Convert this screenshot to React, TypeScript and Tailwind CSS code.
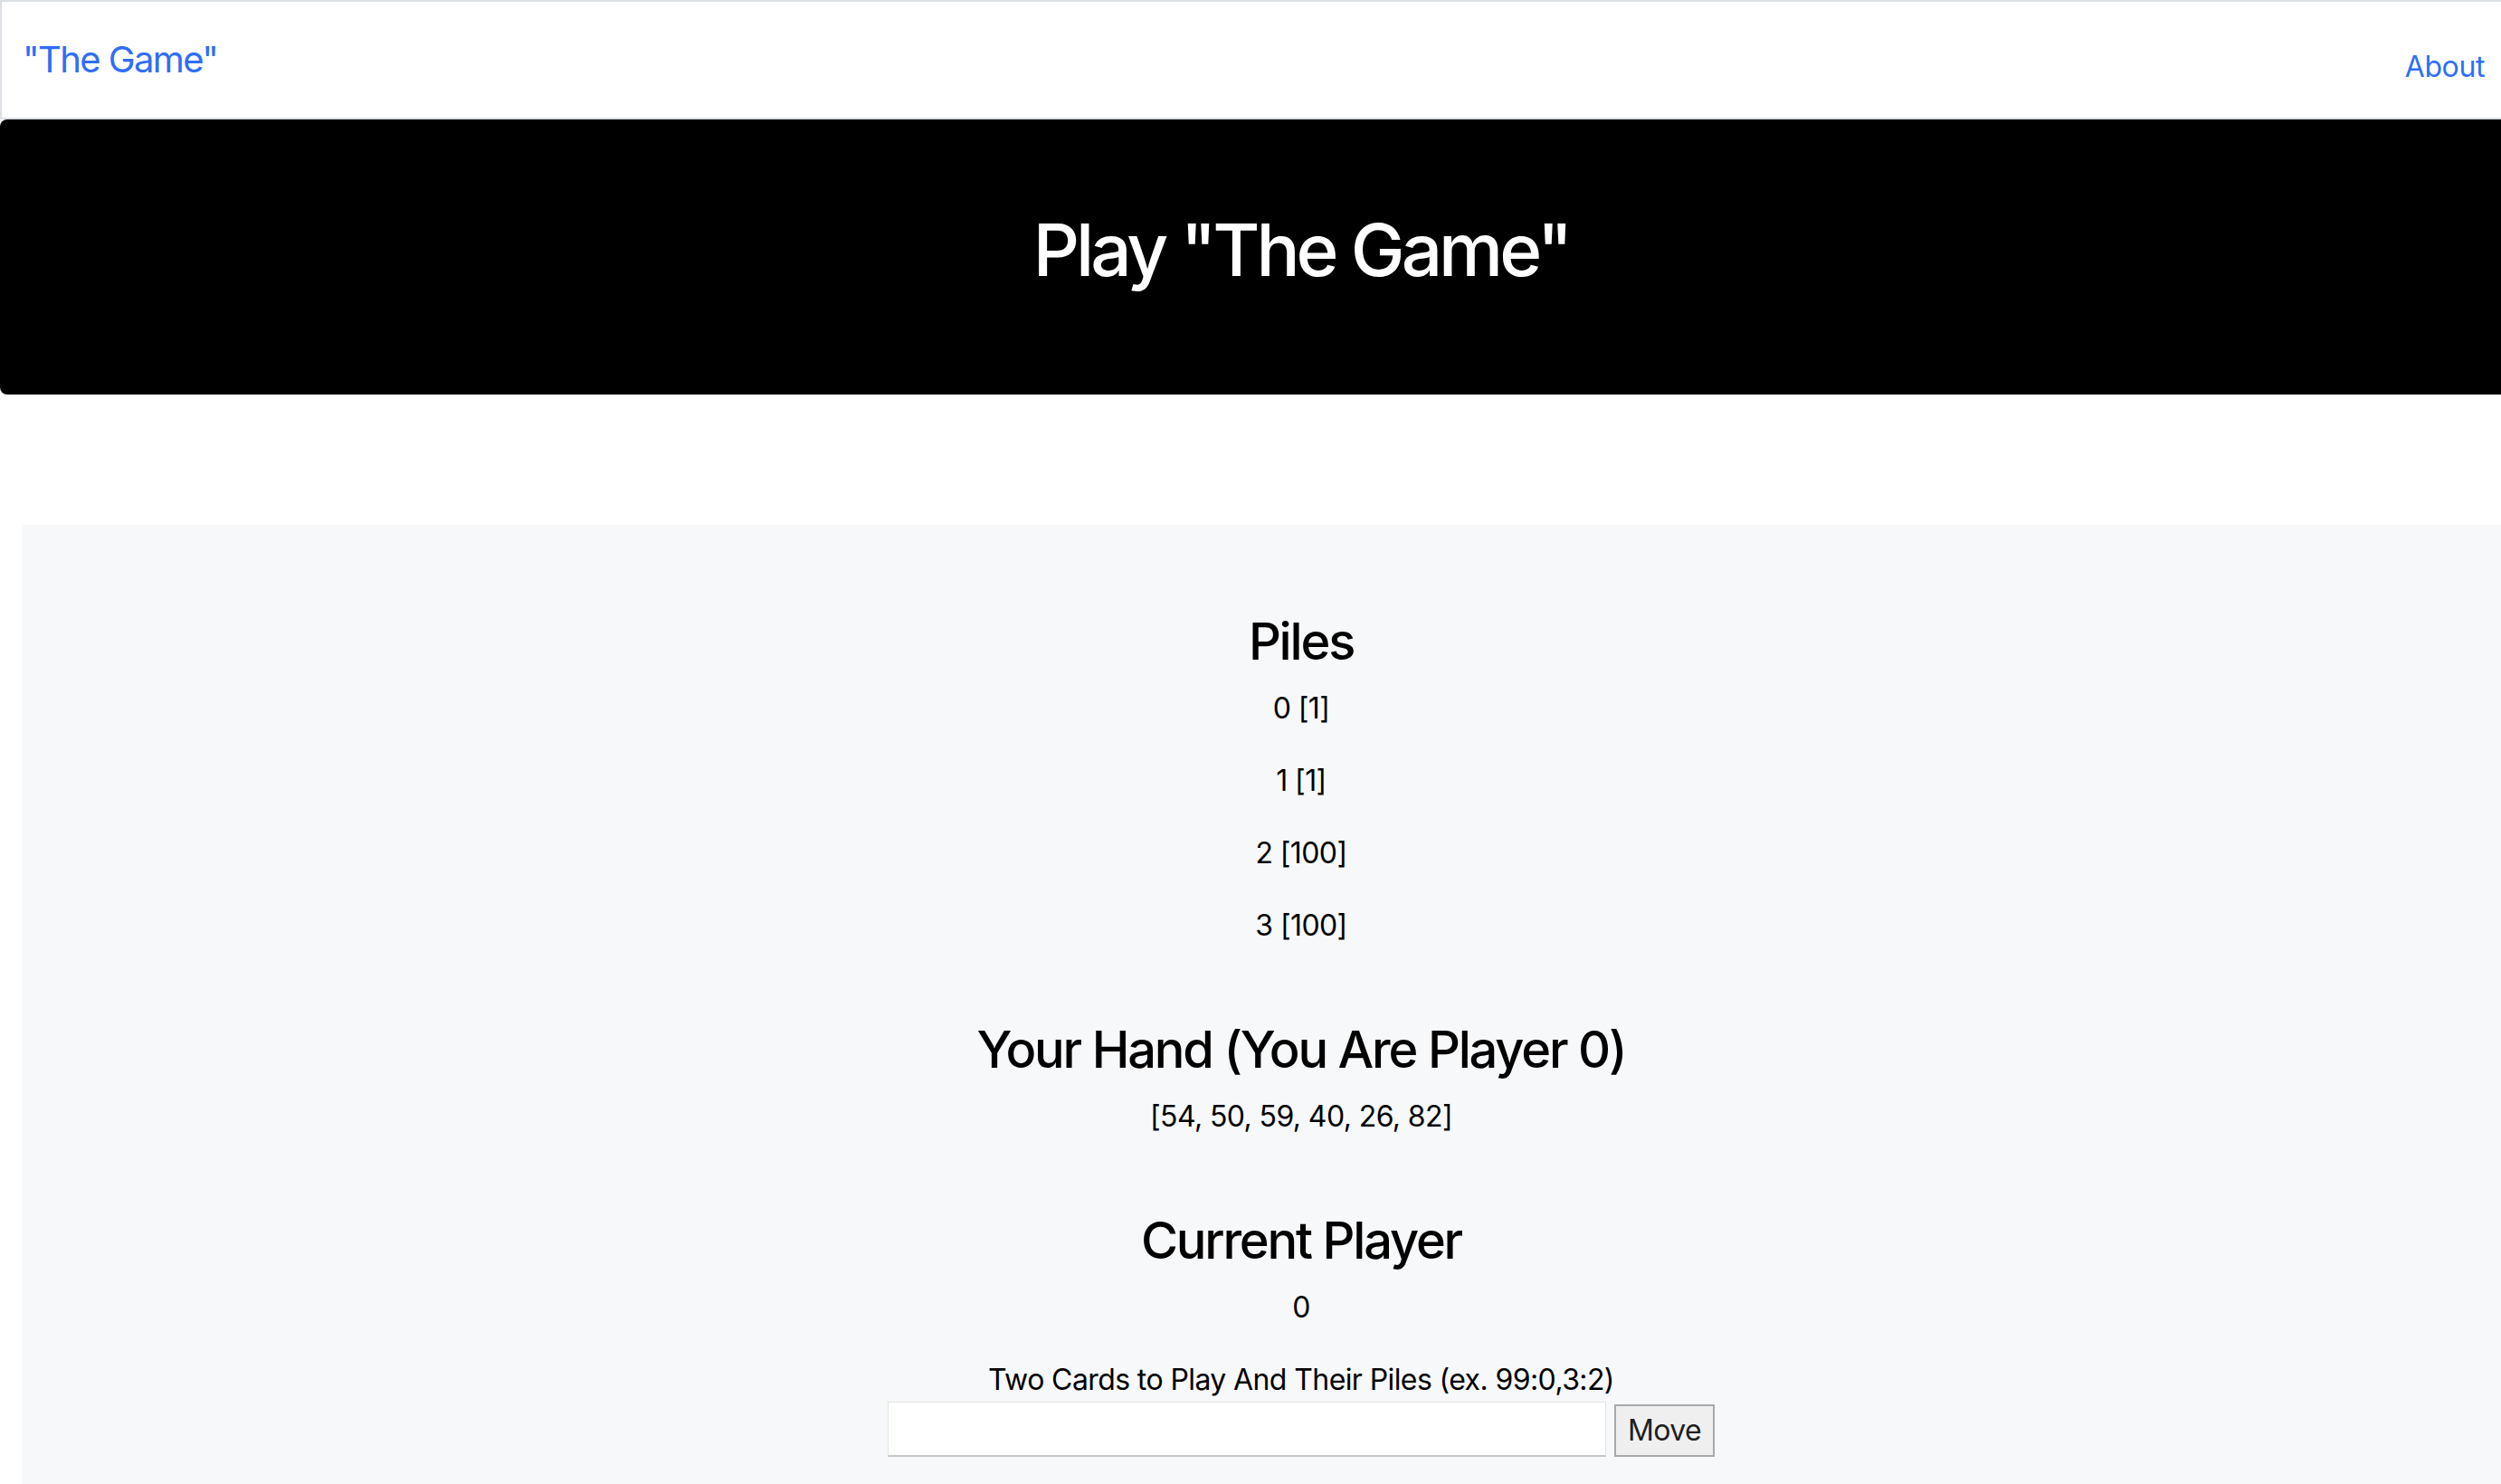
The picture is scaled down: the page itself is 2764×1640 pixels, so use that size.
import React from 'react';

const piles = ['0 [1]', '1 [1]', '2 [100]', '3 [100]'];
const hand = [54, 50, 59, 40, 26, 82];

function App() {
  return (
    <div
      className="w-[2764px] h-[1640px] overflow-hidden bg-white text-black"
      style={{ fontFamily: 'Inter, "Noto Sans", "Liberation Sans", sans-serif' }}
    >
      {/* Navbar */}
      <nav className="h-[132px] border-t-2 border-l-2 border-b-2 border-[#dde0e4] flex items-start justify-between">
        <a className="ml-[23px] mt-[34px] text-[40px] leading-[60px] tracking-[-1.6px] text-[#2f6ef5]">"The Game"</a>
        <a className="mr-[18px] mt-[48px] text-[32px] leading-[48px] tracking-[-0.4px] text-[#2f6ef5]">About</a>
      </nav>

      <div className="w-[2876px]">
        {/* Hero */}
        <div className="h-[304px] bg-black rounded-[8px] pt-[96px] text-center">
          <h1 className="text-[80px] leading-[96px] font-medium tracking-[-4px] text-white">Play "The Game"</h1>
        </div>

        {/* Game board */}
        <div className="mt-[144px] ml-[24px] w-[2828px] h-[1200px] bg-[#f7f8fa] pt-[96px] text-center tracking-[-0.6px]">
          <h3 className="text-[56px] leading-[67px] font-medium tracking-[-2.2px] mb-[16px]">Piles</h3>
          {piles.map((p) => (
            <p key={p} className="text-[32px] leading-[48px] mb-[32px]">{p}</p>
          ))}

          <h3 className="mt-[80px] text-[56px] leading-[67px] font-medium tracking-[-2.2px] mb-[16px]">Your Hand (You Are Player 0)</h3>
          <p className="text-[32px] leading-[48px] mb-[32px]">[{hand.join(', ')}]</p>

          <h3 className="mt-[80px] text-[56px] leading-[67px] font-medium tracking-[-2.2px] mb-[16px]">Current Player</h3>
          <p className="text-[32px] leading-[48px] mb-[32px]">0</p>

          <label className="block text-[32px] leading-[48px]">Two Cards to Play And Their Piles (ex. 99:0,3:2)</label>
          <div className="flex justify-center items-start">
            <input
              type="text"
              className="w-[794px] h-[61px] bg-white border border-[#e3e3e3] border-b-2 border-b-[#c6c6c6] outline-none"
            />
            <button className="ml-[9px] mt-[3px] w-[111px] h-[58px] bg-[#efefef] border-2 border-[#a9a9a9] text-[32px] leading-[48px] text-[#1f1f1f]">
              Move
            </button>
          </div>
        </div>
      </div>
    </div>
  );
}

export default App;
